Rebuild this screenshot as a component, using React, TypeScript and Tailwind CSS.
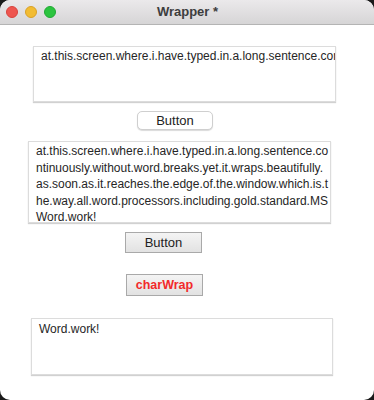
import React from "react";

const font = { fontFamily: '"Liberation Sans", Arial, sans-serif' };

export default function App() {
  const lines = [
    "at.this.screen.where.i.have.typed.in.a.long.sentence.co",
    "ntinuously.without.word.breaks.yet.it.wraps.beautifully.",
    "as.soon.as.it.reaches.the.edge.of.the.window.which.is.t",
    "he.way.all.word.processors.including.gold.standard.MS",
    "Word.work!",
  ];
  return (
    <div className="w-[374px] h-[400px] bg-[#1a1a1a]" style={font}>
      <div className="w-full h-full bg-white rounded-[10px] overflow-hidden flex flex-col">
        <div className="relative h-[25px] shrink-0 bg-gradient-to-b from-[#ebe9eb] to-[#d6d5d6] border-b border-[#b4b4b4] flex items-center">
          <div className="flex items-center gap-[7px] pl-[6px]">
            <div className="w-[12px] h-[12px] rounded-full bg-[#ee5650] border border-[#d8443e]" />
            <div className="w-[12px] h-[12px] rounded-full bg-[#f2bc33] border border-[#d9a127]" />
            <div className="w-[12px] h-[12px] rounded-full bg-[#2cc43f] border border-[#22a834]" />
          </div>
          <div className="absolute inset-0 flex items-center justify-center pl-[1px] text-[13px] font-bold text-[#3d3d3d]">
            Wrapper *
          </div>
        </div>

        <div className="ml-[33px] mt-[21px] w-[303px] h-[56px] border border-[#dcdcdc] shadow-[0_1px_1px_rgba(0,0,0,0.18)] overflow-hidden px-[7px] pt-[1px] text-[12px] leading-[16.75px] text-[#262626] whitespace-nowrap">
          at.this.screen.where.i.have.typed.in.a.long.sentence.continuously
        </div>

        <div className="ml-[137px] mt-[9px] w-[76px] h-[19px] rounded-[5px] bg-white border border-[#cfcfcf] shadow-[0_1px_1px_rgba(0,0,0,0.15)] flex items-center justify-center text-[13px] text-[#222]">
          Button
        </div>

        <div className="ml-[28px] mt-[11px] w-[303px] h-[82px] border border-[#dcdcdc] shadow-[0_1px_1px_rgba(0,0,0,0.18)] px-[7px] pt-[1px] text-[12px] leading-[16.5px] text-[#262626] whitespace-nowrap">
          {lines.map((l) => (
            <div key={l}>{l}</div>
          ))}
        </div>

        <div className="ml-[125px] mt-[9px] w-[77px] h-[21px] bg-gradient-to-b from-[#f4f4f4] to-[#e2e2e2] border border-[#a9a9a9] flex items-center justify-center text-[13px] text-[#222]">
          Button
        </div>

        <div className="ml-[126px] mt-[21px] w-[77px] h-[22px] bg-gradient-to-b from-[#f4f4f4] to-[#e2e2e2] border border-[#a9a9a9] flex items-center justify-center text-[12.5px] font-bold text-[#f22a2a]">
          charWrap
        </div>

        <div className="ml-[31px] mt-[22px] w-[302px] h-[57px] border border-[#dcdcdc] shadow-[0_1px_1px_rgba(0,0,0,0.18)] overflow-hidden px-[7px] pt-[2px] text-[12px] leading-[16.75px] text-[#262626] whitespace-nowrap">
          Word.work!
        </div>
      </div>
    </div>
  );
}
